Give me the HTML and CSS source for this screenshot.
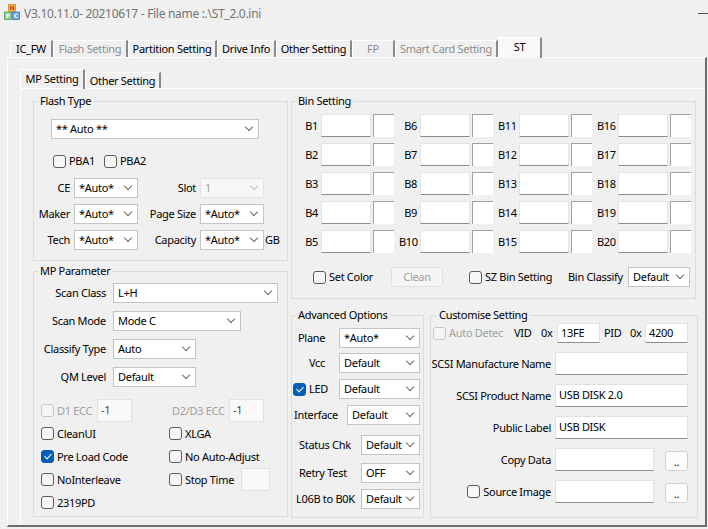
FILE: index.html
```html
<!DOCTYPE html>
<html lang="en">
<head>
    <meta charset="UTF-8">
    <title>MP Tool - ST</title>
    <link rel="stylesheet" href="styles.css">
</head>
<body>
    <!-- Window title -->
    <div class="titlebar">
        <svg class="app-icon" viewBox="0 0 16 16" width="16" height="16">
            <rect x="4.5" y="0.5" width="7" height="7" fill="#f7b64c" stroke="#c7862c" stroke-width="0.7"/>
            <rect x="0.5" y="8" width="7" height="7.5" fill="#8fd08a" stroke="#4f8f4c" stroke-width="0.7"/>
            <rect x="8.5" y="8" width="7" height="7.5" fill="#6aa6e8" stroke="#2f6db0" stroke-width="0.7"/>
            <text x="8" y="6" class="icon-letter n">N</text>
            <text x="4" y="14" class="icon-letter">F</text>
            <text x="12" y="14" class="icon-letter">C</text>
        </svg>
        <span class="title">V3.10.11.0- 20210617 - File name :.\ST_2.0.ini</span>
        <span class="min-btn"></span>
    </div>

    <!-- Main tab strip -->
    <div class="tabs">
        <div class="tab t-icfw">IC_FW</div>
        <div class="tab t-flash off">Flash Setting</div>
        <div class="tab t-part">Partition Setting</div>
        <div class="tab t-drive">Drive Info</div>
        <div class="tab t-other">Other Setting</div>
        <div class="tab t-fp off">FP</div>
        <div class="tab t-smart off">Smart Card Setting</div>
        <div class="tab t-st sel">ST</div>
    </div>

    <div class="panel">
        <div class="subtabs">
            <div class="subtab sel">MP Setting</div>
            <div class="subtab sub-other">Other Setting</div>
        </div>

        <div class="page">
            <!-- Left column: flash type + MP parameter -->
            <div class="col-left">
                <fieldset class="grp flash-type">
                    <legend>Flash Type</legend>
                    <div class="combo w208 ft-combo">** Auto **</div>
                    <div class="pba-row">
                        <label class="chk pba1"><span class="cb"></span>PBA1</label>
                        <label class="chk"><span class="cb"></span>PBA2</label>
                    </div>
                    <div class="ft-grid">
                        <span class="lbl">CE</span>
                        <div class="combo w64">*Auto*</div>
                        <span class="lbl">Slot</span>
                        <div class="combo w64 dis">1</div>
                        <span></span>

                        <span class="lbl">Maker</span>
                        <div class="combo w64">*Auto*</div>
                        <span class="lbl">Page Size</span>
                        <div class="combo w64">*Auto*</div>
                        <span></span>

                        <span class="lbl">Tech</span>
                        <div class="combo w64">*Auto*</div>
                        <span class="lbl">Capacity</span>
                        <div class="combo w64">*Auto*</div>
                        <span class="gb">GB</span>
                    </div>
                </fieldset>

                <fieldset class="grp mp-param">
                    <legend>MP Parameter</legend>
                    <div class="mp-grid">
                        <span class="lbl">Scan Class</span>
                        <div class="combo w165">L+H</div>
                        <span class="lbl">Scan Mode</span>
                        <div class="combo w128">Mode C</div>
                        <span class="lbl">Classify Type</span>
                        <div class="combo w83">Auto</div>
                        <span class="lbl">QM Level</span>
                        <div class="combo w83">Default</div>
                    </div>
                    <div class="opt-grid">
                        <div class="cell">
                            <label class="chk dis"><span class="cb"></span><span class="d1-text">D1 ECC</span></label>
                            <div class="field ecc dis">-1</div>
                        </div>
                        <div class="cell">
                            <span class="d23-text">D2/D3 ECC</span>
                            <div class="field ecc dis">-1</div>
                        </div>

                        <label class="chk"><span class="cb"></span>CleanUI</label>
                        <label class="chk"><span class="cb"></span>XLGA</label>

                        <label class="chk"><span class="cb on"></span>Pre Load Code</label>
                        <label class="chk"><span class="cb"></span>No Auto-Adjust</label>

                        <label class="chk"><span class="cb"></span>NoInterleave</label>
                        <div class="cell">
                            <label class="chk"><span class="cb"></span>Stop Time</label>
                            <div class="field stop-time"></div>
                        </div>

                        <label class="chk"><span class="cb"></span>2319PD</label>
                    </div>
                </fieldset>
            </div>

            <!-- Right column: bins + advanced + customise -->
            <div class="col-right">
                <fieldset class="grp bin-setting">
                    <legend>Bin Setting</legend>
                    <div class="bin-grid">
                        <div class="bin"><span>B1</span><div class="bf"></div><div class="bc"></div></div>
                        <div class="bin"><span>B6</span><div class="bf"></div><div class="bc"></div></div>
                        <div class="bin"><span>B11</span><div class="bf"></div><div class="bc"></div></div>
                        <div class="bin"><span>B16</span><div class="bf"></div><div class="bc"></div></div>

                        <div class="bin"><span>B2</span><div class="bf"></div><div class="bc"></div></div>
                        <div class="bin"><span>B7</span><div class="bf"></div><div class="bc"></div></div>
                        <div class="bin"><span>B12</span><div class="bf"></div><div class="bc"></div></div>
                        <div class="bin"><span>B17</span><div class="bf"></div><div class="bc"></div></div>

                        <div class="bin"><span>B3</span><div class="bf"></div><div class="bc"></div></div>
                        <div class="bin"><span>B8</span><div class="bf"></div><div class="bc"></div></div>
                        <div class="bin"><span>B13</span><div class="bf"></div><div class="bc"></div></div>
                        <div class="bin"><span>B18</span><div class="bf"></div><div class="bc"></div></div>

                        <div class="bin"><span>B4</span><div class="bf"></div><div class="bc"></div></div>
                        <div class="bin"><span>B9</span><div class="bf"></div><div class="bc"></div></div>
                        <div class="bin"><span>B14</span><div class="bf"></div><div class="bc"></div></div>
                        <div class="bin"><span>B19</span><div class="bf"></div><div class="bc"></div></div>

                        <div class="bin"><span>B5</span><div class="bf"></div><div class="bc"></div></div>
                        <div class="bin"><span>B10</span><div class="bf"></div><div class="bc"></div></div>
                        <div class="bin"><span>B15</span><div class="bf"></div><div class="bc"></div></div>
                        <div class="bin"><span>B20</span><div class="bf"></div><div class="bc"></div></div>
                    </div>
                    <div class="bin-bottom">
                        <label class="chk set-color"><span class="cb"></span>Set Color</label>
                        <div class="btn dis clean">Clean</div>
                        <label class="chk sz-bin"><span class="cb"></span>SZ Bin Setting</label>
                        <span class="bin-classify">Bin Classify</span>
                        <div class="combo w62">Default</div>
                    </div>
                </fieldset>

                <div class="lower-row">
                    <fieldset class="grp advanced">
                        <legend>Advanced Options</legend>
                        <div class="adv-row r-plane"><span class="lbl">Plane</span><div class="combo w81">*Auto*</div></div>
                        <div class="adv-row r-vcc"><span class="lbl">Vcc</span><div class="combo w81">Default</div></div>
                        <div class="adv-row r-led"><label class="chk"><span class="cb on"></span>LED</label><div class="combo w81">Default</div></div>
                        <div class="adv-row r-iface"><span class="lbl">Interface</span><div class="combo w73">Default</div></div>
                        <div class="adv-row r-status"><span class="lbl">Status Chk</span><div class="combo w59">Default</div></div>
                        <div class="adv-row r-retry"><span class="lbl">Retry Test</span><div class="combo w59">OFF</div></div>
                        <div class="adv-row r-l06b"><span class="lbl">L06B to B0K</span><div class="combo w59">Default</div></div>
                    </fieldset>

                    <fieldset class="grp customise">
                        <legend>Customise Setting</legend>
                        <div class="vid-row">
                            <label class="chk dis auto-detect"><span class="cb"></span><span class="auto-text">Auto Detec</span></label>
                            <span class="vid">VID</span>
                            <span class="ox">0x</span>
                            <div class="field hex">13FE</div>
                            <span class="pid">PID</span>
                            <span class="ox2">0x</span>
                            <div class="field hex">4200</div>
                        </div>
                        <div class="cs-grid">
                            <span class="lbl">SCSI Manufacture Name</span>
                            <div class="field"></div>
                            <span class="lbl">SCSI Product Name</span>
                            <div class="field">USB DISK 2.0</div>
                            <span class="lbl">Public Label</span>
                            <div class="field">USB DISK</div>
                            <span class="lbl">Copy Data</span>
                            <div class="cell browse"><div class="field path"></div><div class="btn dots">..</div></div>
                            <label class="chk lbl"><span class="cb"></span>Source Image</label>
                            <div class="cell browse"><div class="field path"></div><div class="btn dots">..</div></div>
                        </div>
                    </fieldset>
                </div>
            </div>
        </div>
    </div>
</body>
</html>
```

FILE: styles.css
```css
/* Whole window, classic dialog look */
* {
    box-sizing: border-box;
}
body {
    margin: 0;
    width: 708px;
    height: 529px;
    overflow: hidden;
    background: #f0f0f0;
    font-family: "Noto Sans", "Segoe UI", sans-serif;
    font-size: 11px;
    letter-spacing: -0.3px;
    line-height: 14px;
    color: #000;
}

/* Title bar */
.titlebar {
    display: flex;
    align-items: flex-start;
    height: 37px;
    padding: 4px 0 0 4px;
}
.app-icon {
    flex: none;
}
.icon-letter {
    font-family: "DejaVu Sans", sans-serif;
    font-size: 6px;
    font-weight: bold;
    text-anchor: middle;
    fill: #fff;
    letter-spacing: 0;
}
.icon-letter.n {
    fill: #d23a1e;
}
.title {
    margin-left: 4px;
    font-size: 12px;
    line-height: 20px;
    color: #747474;
}
.min-btn {
    margin: 9px 0 0 auto;
    width: 10px;
    height: 1px;
    background: #555;
}

/* Main tabs */
.tabs {
    display: flex;
    align-items: flex-end;
    height: 20px;
    padding-left: 10px;
}
.tab {
    height: 17px;
    line-height: 15px;
    text-align: center;
    white-space: nowrap;
    border-top: 1px solid #fff;
    border-left: 1px solid #fff;
    border-right: 2px solid #8a8a8a;
    background: #f0f0f0;
}
.tab.off {
    color: #8d8d8d;
}
.tab.sel {
    position: relative;
    z-index: 1;
    height: 21px;
    margin-bottom: -1px;
    line-height: 18px;
    background: #f9f9f9;
}
.t-icfw { width: 43px; }
.t-flash { width: 75px; }
.t-part { width: 89px; }
.t-drive { width: 59px; }
.t-other { width: 76px; }
.t-fp { width: 43px; }
.t-smart { width: 103px; }
.t-st { width: 44px; }

/* Tab page */
.panel {
    margin-left: 7px;
    width: 700px;
    height: 470px;
    overflow: hidden;
    border-style: solid;
    border-width: 1px 2px 2px 1px;
    border-color: #fff #6d6d6d #6d6d6d #fff;
    padding: 11px 0 0 12px;
}

/* Inner tabs */
.subtabs {
    display: flex;
    align-items: flex-end;
    height: 19px;
}
.subtab {
    height: 16px;
    line-height: 15px;
    text-align: center;
    border-top: 1px solid #fff;
    border-left: 1px solid #fff;
    border-right: 2px solid #8a8a8a;
}
.subtab.sel {
    position: relative;
    z-index: 1;
    width: 65px;
    height: 20px;
    margin-bottom: -1px;
    line-height: 18px;
}
.sub-other {
    width: 76px;
}
.page {
    display: grid;
    grid-template-columns: 255px 407px;
    column-gap: 3px;
    align-items: start;
    width: 700px;
    height: 445px;
    border-top: 1px solid #fff;
    border-left: 1px solid #fff;
    padding: 5px 0 0 12px;
}

/* Group boxes */
.grp {
    margin: 0;
    padding: 0;
    min-width: 0;
    border: 1px solid #dcdcdc;
}
.grp legend {
    margin-left: 4px;
    padding: 0 2px;
    line-height: 14px;
}
.col-left {
    display: flex;
    flex-direction: column;
    gap: 3px;
}
.flash-type { height: 167px; }
.mp-param { height: 253px; }
.bin-setting { width: 405px; height: 205px; }
.lower-row {
    display: flex;
    gap: 6px;
    margin-top: 9px;
}
.advanced { width: 133px; height: 210px; }
.customise { width: 268px; height: 210px; }
.customise legend { margin-left: 6px; }

/* Controls */
.lbl {
    text-align: right;
    white-space: nowrap;
}
.combo {
    display: flex;
    align-items: center;
    justify-content: space-between;
    height: 20px;
    padding: 0 6px 0 4px;
    background: #fff;
    border: 1px solid #c4c4c4;
    white-space: nowrap;
}
.combo::after {
    content: "";
    width: 5px;
    height: 5px;
    margin-top: -4px;
    border-right: 1px solid #6a6a6a;
    border-bottom: 1px solid #6a6a6a;
    transform: rotate(45deg);
}
.combo.dis {
    background: #f7f7f7;
    border-color: #e2e2e2;
    color: #a3a3a3;
}
.combo.dis::after {
    border-color: #c2c2c2;
}
.w59 { width: 59px; }
.w62 { width: 62px; }
.w64 { width: 64px; }
.w73 { width: 73px; }
.w81 { width: 81px; }
.w83 { width: 83px; }
.w128 { width: 128px; }
.w165 { width: 165px; }
.w208 { width: 208px; }

.field {
    height: 23px;
    padding: 2px 3px 0;
    line-height: 16px;
    background: #fff;
    border: 1px solid #e1e1e1;
    border-bottom-color: #8c8c8c;
    white-space: nowrap;
}
.field.dis {
    background: #f9f9f9;
    border-color: #e1e1e1;
    color: #444;
}

.chk {
    display: flex;
    align-items: center;
    gap: 3px;
    white-space: nowrap;
}
.cb {
    flex: none;
    width: 13px;
    height: 13px;
    border: 1px solid #5b5b5b;
    border-radius: 3px;
    background: #f6f6f6;
}
.cb.on {
    display: flex;
    justify-content: center;
    border-color: #005fb8;
    background: #005fb8;
}
.cb.on::after {
    content: "";
    width: 3px;
    height: 6px;
    margin-top: 1px;
    border-right: 1px solid #fff;
    border-bottom: 1px solid #fff;
    transform: rotate(45deg);
}
.chk.dis {
    color: #a0a0a0;
}
.chk.dis .cb {
    border-color: #c6c6c6;
}

.btn {
    height: 20px;
    line-height: 18px;
    text-align: center;
    background: #fcfcfc;
    border: 1px solid #d0d0d0;
    border-radius: 3px;
}
.btn.dis {
    background: #f5f5f5;
    border-color: #e0e0e0;
    color: #a0a0a0;
}

/* Flash type */
.ft-combo {
    margin: 11px 0 0 17px;
}
.pba-row {
    display: flex;
    height: 18px;
    margin-top: 13px;
    padding-left: 19px;
}
.pba1 {
    width: 51px;
}
.ft-grid {
    display: grid;
    grid-template-columns: 36px 64px 54px 64px auto;
    grid-auto-rows: 20px;
    column-gap: 4px;
    row-gap: 6px;
    align-items: center;
    margin-top: 8px;
}
.gb {
    margin-left: -3px;
}

/* MP parameter */
.mp-grid {
    display: grid;
    grid-template-columns: 72px auto;
    grid-auto-rows: 20px;
    column-gap: 7px;
    row-gap: 8px;
    align-items: center;
    justify-items: start;
    margin-top: 5px;
}
.mp-grid .lbl {
    justify-self: end;
}
.opt-grid {
    display: grid;
    grid-template-columns: 128px auto;
    grid-auto-rows: 23px;
    align-items: center;
    margin: 12px 0 0 7px;
}
.cell {
    display: flex;
    align-items: center;
}
.d1-text {
    width: 37px;
}
.ecc {
    width: 35px;
    margin-left: 3px;
}
.d23-text {
    width: 57px;
    padding-left: 3px;
    color: #a0a0a0;
}
.stop-time {
    width: 29px;
    margin-left: 7px;
    background: #f9f9f9;
    border-bottom-color: #e1e1e1;
}

/* Bin setting */
.bin-grid {
    display: grid;
    grid-template-columns: repeat(4, 94px);
    grid-auto-rows: 23px;
    column-gap: 5px;
    row-gap: 6px;
    margin: 6px 0 0 8px;
}
.bin {
    display: flex;
    align-items: center;
}
.bin span {
    width: 18px;
    margin-right: 3px;
    text-align: right;
}
.bf {
    width: 50px;
    height: 23px;
    background: #fff;
    border: 1px solid #e4e4e4;
    border-bottom-color: #8c8c8c;
}
.bc {
    width: 21px;
    height: 23px;
    margin-left: 2px;
    background: #fff;
    border-top: 1px solid #a0a0a0;
    border-left: 1px solid #a0a0a0;
}
.bin-bottom {
    display: flex;
    align-items: center;
    height: 20px;
    margin: 14px 0 0 21px;
}
.set-color {
    width: 78px;
}
.clean {
    width: 52px;
}
.sz-bin {
    width: 99px;
    margin-left: 26px;
}
.bin-classify {
    width: 60px;
}

/* Advanced options */
.adv-row {
    display: flex;
    align-items: center;
    height: 20px;
    padding-right: 3px;
}
.adv-row .combo {
    margin-left: auto;
}
.r-plane { margin-top: 6px; padding-left: 6px; }
.r-vcc { margin-top: 5px; padding-left: 17px; }
.r-led { margin-top: 6px; padding-left: 1px; }
.r-iface { margin-top: 6px; padding-left: 2px; }
.r-status { margin-top: 10px; padding-left: 7px; }
.r-retry { margin-top: 8px; padding-left: 7px; }
.r-l06b { margin-top: 6px; padding-left: 4px; }

/* Customise setting */
.vid-row {
    display: flex;
    align-items: center;
    height: 20px;
    margin-top: 1px;
    padding-left: 2px;
}
.auto-text {
    width: 52px;
}
.vid {
    width: 27px;
    margin-left: 13px;
}
.ox {
    width: 16px;
}
.pid {
    width: 26px;
    margin-left: 4px;
}
.ox2 {
    width: 15px;
}
.hex {
    width: 43px;
    height: 20px;
    padding-top: 1px;
}
.cs-grid {
    display: grid;
    grid-template-columns: 120px 133px;
    grid-auto-rows: 23px;
    column-gap: 4px;
    row-gap: 9px;
    align-items: center;
    margin-top: 9px;
}
.cs-grid .chk {
    justify-content: flex-end;
}
.browse {
    align-items: flex-end;
    height: 23px;
}
.path {
    width: 99px;
}
.dots {
    width: 23px;
    margin-left: 11px;
    line-height: 20px;
}
```
